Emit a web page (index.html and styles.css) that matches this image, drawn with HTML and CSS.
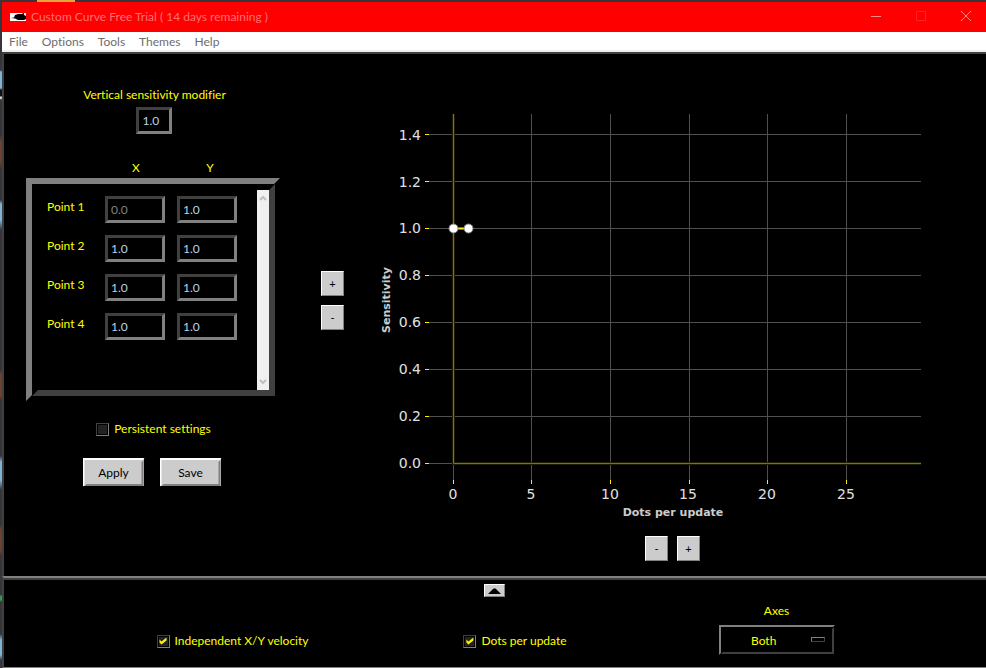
FILE: index.html
```html
<!DOCTYPE html>
<html lang="en">
<head>
<meta charset="utf-8">
<title>Custom Curve</title>
<link rel="stylesheet" href="styles.css">
</head>
<body>
<div class="desktop">
  <div class="window">
    <header class="titlebar">
      <svg class="app-icon" width="16" height="8" viewBox="0 0 16 8" aria-hidden="true">
        <rect width="16" height="8" fill="#fff"/>
        <path d="M1 5l3-.5 1-2.500 3-1h4l1-1h1v2l2 1v3l-2 1H8L5 5.500z" fill="#000"/>
      </svg>
      <h1 class="title">Custom Curve Free Trial ( 14 days remaining )</h1>
      <div class="window-buttons">
        <button class="window-button" aria-label="Minimize"><svg width="12" height="12" viewBox="0 0 12 12"><path d="M1 6.500h10" stroke="#ff8c8c"/></svg></button>
        <button class="window-button" aria-label="Maximize" disabled><svg width="12" height="12" viewBox="0 0 12 12"><path d="M1.500 1.500h9v9h-9z" stroke="#ff2020" fill="none"/></svg></button>
        <button class="window-button" aria-label="Close"><svg width="12" height="12" viewBox="0 0 12 12"><path d="M1 1l10 10M11 1L1 11" stroke="#ff8c8c"/></svg></button>
      </div>
    </header>
    <nav class="menubar">
      <button class="menu">File</button>
      <button class="menu">Options</button>
      <button class="menu">Tools</button>
      <button class="menu">Themes</button>
      <button class="menu">Help</button>
    </nav>
    <main class="workspace">
      <section class="settings">
        <div class="modifier">
          <label for="modifier">Vertical sensitivity modifier</label>
          <input class="entry entry-small" id="modifier" value="1.0">
        </div>
        <div class="heads"><span>X</span><span>Y</span></div>
        <div class="frame bevel">
          <div class="points">
            <div class="point"><label for="x1">Point 1</label><input class="entry" id="x1" value="0.0" disabled><input class="entry" value="1.0" aria-label="Point 1 Y"></div>
            <div class="point"><label for="x2">Point 2</label><input class="entry" id="x2" value="1.0"><input class="entry" value="1.0" aria-label="Point 2 Y"></div>
            <div class="point"><label for="x3">Point 3</label><input class="entry" id="x3" value="1.0"><input class="entry" value="1.0" aria-label="Point 3 Y"></div>
            <div class="point"><label for="x4">Point 4</label><input class="entry" id="x4" value="1.0"><input class="entry" value="1.0" aria-label="Point 4 Y"></div>
          </div>
          <div class="scrollbar" aria-hidden="true">
            <svg width="8" height="6" viewBox="0 0 8 6"><path d="M1 5l3-3 3 3" fill="none" stroke="#bfbfbf" stroke-width="2"/></svg>
            <svg width="8" height="6" viewBox="0 0 8 6"><path d="M1 1l3 3 3-3" fill="none" stroke="#bfbfbf" stroke-width="2"/></svg>
          </div>
        </div>
        <label class="check persistent"><input type="checkbox">Persistent settings</label>
        <div class="actions">
          <button class="action bevel">Apply</button>
          <button class="action bevel">Save</button>
        </div>
      </section>
      <div class="zoom-y">
        <button class="step" aria-label="Increase sensitivity range">+</button>
        <button class="step" aria-label="Decrease sensitivity range">-</button>
      </div>
      <section class="plot">
        <svg class="chart" viewBox="362 104 621 420" role="img" aria-label="Sensitivity curve">
          <path class="grid" d="M428 134.500H921M428 181.500H921M428 228.500H921M428 275.500H921M428 322.500H921M428 369.500H921M428 416.500H921M428 463.500H921M453.500 114V480M531.500 114V480M610.500 114V480M689.500 114V480M767.500 114V480M846.500 114V480"/>
          <path class="axis-glow" d="M453.500 114V463.500H921"/>
          <path class="axis" d="M453.500 114V463.500H921"/>
          <path class="tick" d="M425 134.500h4M425 181.500h4M425 228.500h4M425 275.500h4M425 322.500h4M425 369.500h4M425 416.500h4M425 463.500h4M453.500 480v4M531.500 480v4M610.500 480v4M689.500 480v4M767.500 480v4M846.500 480v4"/>
          <path class="curve" d="M453.500 228.500H468.500"/>
          <circle class="knot" cx="453.500" cy="228.500" r="4.500"/>
          <circle class="knot" cx="468.500" cy="228.500" r="4.500"/>
          <g class="y-labels">
            <text x="421" y="140">1.4</text><text x="421" y="187">1.2</text><text x="421" y="233">1.0</text><text x="421" y="280">0.8</text>
            <text x="421" y="327">0.6</text><text x="421" y="374">0.4</text><text x="421" y="421">0.2</text><text x="421" y="468">0.0</text>
          </g>
          <g class="x-labels">
            <text x="453" y="499">0</text><text x="531" y="499">5</text><text x="610" y="499">10</text>
            <text x="688" y="499">15</text><text x="767" y="499">20</text><text x="846" y="499">25</text>
          </g>
          <text class="axis-name" x="673" y="516">Dots per update</text>
          <text class="axis-name" transform="translate(390 300) rotate(-90)">Sensitivity</text>
        </svg>
        <div class="zoom-x">
          <button class="step" aria-label="Decrease dots range">-</button>
          <button class="step" aria-label="Increase dots range">+</button>
        </div>
      </section>
    </main>
    <footer class="drawer">
      <button class="collapse" aria-label="Collapse panel"><svg width="13" height="6" viewBox="0 0 13 6"><path d="M0 6l5.500-5.500h2L13 6z" fill="#000"/></svg></button>
      <div class="options">
        <label class="check"><input type="checkbox" checked>Independent X/Y velocity</label>
        <label class="check"><input type="checkbox" checked>Dots per update</label>
        <div class="axes">
          <label for="axes">Axes</label>
          <div class="picker bevel">
            <select id="axes"><option>Both</option><option>X</option><option>Y</option></select>
            <span class="indicator"></span>
          </div>
        </div>
      </div>
    </footer>
  </div>
</div>
</body>
</html>
```
FILE: styles.css
```css
* { box-sizing: border-box; }

body {
  margin: 0;
  background: #000;
  color: #ffff00;
  font: 12px/16px Lato, "Open Sans", sans-serif;
  font-variant-ligatures: none;
}

button, input, select { font: inherit; }

/* A sliver of the desktop shows along the top and left edges. */
.desktop {
  min-height: 100vh;
  display: flex;
  padding: 2px 0 0 2px;
  background:
    linear-gradient(90deg, #35353b 37px, #e0a83c 37px 75px, #35353b 75px) top / 100% 2px no-repeat,
    linear-gradient(#35353b 70px, #7fb4d8 72px 88px, #111 90px 96px, #ddd 97px 98px, #35353b 100px 135px, #70402c 142px 160px, #35353b 170px 200px, #7fb4d8 204px 220px, #35353b 230px 370px, #70402c 374px 396px, #35353b 400px 456px, #7fb4d8 462px 480px, #35353b 490px 524px, #70402c 530px 550px, #35353b 556px 595px, #2f9a50 596px 600px, #35353b 602px 634px, #7fb4d8 640px 655px, #35353b 660px) left / 2px 100% no-repeat;
}

.window {
  flex: 1;
  display: flex;
  flex-direction: column;
}

.titlebar {
  height: 30px;
  display: flex;
  align-items: center;
  padding-left: 8px;
  background: #ff0000;
}

.app-icon { margin-right: 5px; }

.title {
  margin: 0;
  color: #ff7070;
  font-size: 12px;
  font-weight: 400;
}

.window-buttons { display: flex; margin-left: auto; }

.window-button {
  width: 45px;
  height: 30px;
  display: grid;
  place-items: center;
  padding: 0 0 2px 4px;
  border: 0;
  background: none;
}

.menubar {
  height: 20px;
  display: flex;
  gap: 14px;
  padding: 2px 7px 0;
  background: #fff;
  border-bottom: 2px solid #f0f0f0;
}

.menu {
  padding: 0;
  border: 0;
  background: none;
  color: #6d6d6d;
}

.workspace {
  flex: 1;
  display: grid;
  grid-template-columns: 299px 59px 1fr;
  align-items: start;
  background: #000;
  border-top: 2px solid #404040;
  border-left: 2px solid #404040;
}

.settings {
  width: 275px;
  display: flex;
  flex-direction: column;
  align-items: center;
  padding: 33px 0 0 22px;
}

.modifier {
  display: flex;
  flex-direction: column;
  align-items: center;
  gap: 4px;
  padding-left: 4px;
}

.entry {
  width: 60px;
  height: 27px;
  padding: 0 3px;
  border: 3px solid;
  border-color: #404040 #808080 #808080 #404040;
  border-radius: 0;
  background: #000;
  color: #b8d4e8;
  outline: 0;
}

.entry-small { width: 36px; }
.entry:disabled { color: #808080; }

.heads {
  align-self: flex-start;
  display: grid;
  grid-template-columns: 60px 60px;
  gap: 14px;
  margin: 26px 0 2px 80px;
  text-align: center;
}

/* Raised edge whose light corners run past the box, as Tk draws them. */
.bevel {
  --edge: 2px;
  --light: #fff;
  --dark: #808080;
  position: relative;
}

.bevel::before, .bevel::after {
  content: "";
  position: absolute;
  inset: 0;
  pointer-events: none;
}

.bevel::before {
  inset: 0 calc(1px - var(--edge)) calc(1px - var(--edge)) 0;
  background: var(--light);
  clip-path: polygon(0 0, 100% 0, calc(100% - var(--edge)) var(--edge), var(--edge) var(--edge), var(--edge) calc(100% - var(--edge)), 0 100%);
}

.bevel::after {
  background: var(--dark);
  clip-path: polygon(100% var(--edge), 100% 100%, var(--edge) 100%, calc(2 * var(--edge)) calc(100% - var(--edge)), calc(100% - var(--edge)) calc(100% - var(--edge)), calc(100% - var(--edge)) calc(2 * var(--edge)));
}

.frame {
  --edge: 6px;
  --light: #808080;
  --dark: #404040;
  align-self: flex-start;
  width: 249px;
  height: 218px;
  display: flex;
  justify-content: space-between;
  padding: 12px 6px 6px 21px;
}

.points {
  display: flex;
  flex-direction: column;
  gap: 12px;
  padding-top: 6px;
}

.point {
  display: grid;
  grid-template-columns: 46px 60px 60px;
  column-gap: 12px;
}

.point label { padding-top: 3px; }

.scrollbar {
  width: 12px;
  display: flex;
  flex-direction: column;
  align-items: center;
  justify-content: space-between;
  padding: 5px 0;
  background: #f0f0f0;
}

.check {
  display: flex;
  align-items: center;
  gap: 5px;
}

.check input {
  appearance: none;
  width: 13px;
  height: 13px;
  margin: 0;
  border: 1px solid;
  border-color: #404040 #808080 #808080 #404040;
  background: #222;
  box-shadow: inset 0 0 0 1px #000;
}

.check input:checked::before {
  content: "";
  display: block;
  width: 11px;
  height: 11px;
  background: #ffee00;
  clip-path: polygon(2px 4px, 4px 6px, 9px 2px, 9px 5px, 4px 9px, 2px 7px);
}

.persistent { margin: 25px 0 21px; padding-left: 2px; }

.actions { display: flex; gap: 16px; padding-right: 2px; }

.action {
  width: 61px;
  height: 28px;
  padding: 1px 0 0 1px;
  border: 0;
  background: #ccc;
  color: #000;
}

.step {
  width: 23px;
  height: 25px;
  padding: 0;
  border: 1px solid;
  border-color: #fff #808080 #808080 #fff;
  background: #ccc;
  color: #000;
  font-size: 11px;
}

.zoom-y {
  display: flex;
  flex-direction: column;
  align-items: center;
  gap: 9px;
  padding-top: 217px;
}

.plot { padding: 50px 3px 0 0; }
.chart { display: block; width: 100%; }

.grid { stroke: #505050; }
.axis-glow { fill: none; stroke: #1f1c00; stroke-width: 3; }
.axis { fill: none; stroke: #807600; }
.tick { stroke: #ffee00; stroke-width: 1; }
.curve { stroke: #ffee00; stroke-width: 2; }
.knot { fill: #fff; stroke: #808080; }

.chart text {
  fill: #e0e0e0;
  font-family: "DejaVu Sans", sans-serif;
  font-size: 14px;
}

.y-labels { text-anchor: end; }
.x-labels { text-anchor: middle; }

.chart .axis-name {
  fill: #ccc;
  font-size: 11px;
  font-weight: 700;
  text-anchor: middle;
}

.zoom-x {
  display: flex;
  justify-content: center;
  gap: 9px;
  margin-top: 12px;
}

.drawer {
  height: 92px;
  display: flex;
  flex-direction: column;
  align-items: center;
  background: #000;
  border-left: 2px solid #404040;
  border-top: 2px solid #808080;
  border-bottom: 1px solid #808080;
  box-shadow: inset 0 2px #404040;
  padding-right: 2px;
}

.collapse {
  width: 21px;
  height: 13px;
  display: grid;
  place-items: center;
  margin-top: 6px;
  padding: 0;
  border: 1px solid;
  border-color: #fff #808080 #808080 #fff;
  background: #ccc;
}

.options {
  align-self: stretch;
  display: grid;
  grid-template-columns: 457fr 108fr 415fr;
  justify-items: center;
  align-items: end;
  margin-top: 6px;
}

.options > .check {
  margin-bottom: 5px;
  white-space: nowrap;
}

.axes {
  display: flex;
  flex-direction: column;
  align-items: center;
  gap: 6px;
}

.picker {
  --light: #808080;
  --dark: #404040;
  width: 115px;
  height: 29px;
}

.picker select {
  appearance: none;
  width: 100%;
  height: 100%;
  padding: 2px 0 0 32px;
  border: 0;
  background: #000;
  color: #ffff00;
}

.indicator {
  position: absolute;
  right: 9px;
  top: 12px;
  width: 14px;
  height: 5px;
  border: 1px solid;
  border-color: #808080 #404040 #404040 #808080;
  pointer-events: none;
}
```
